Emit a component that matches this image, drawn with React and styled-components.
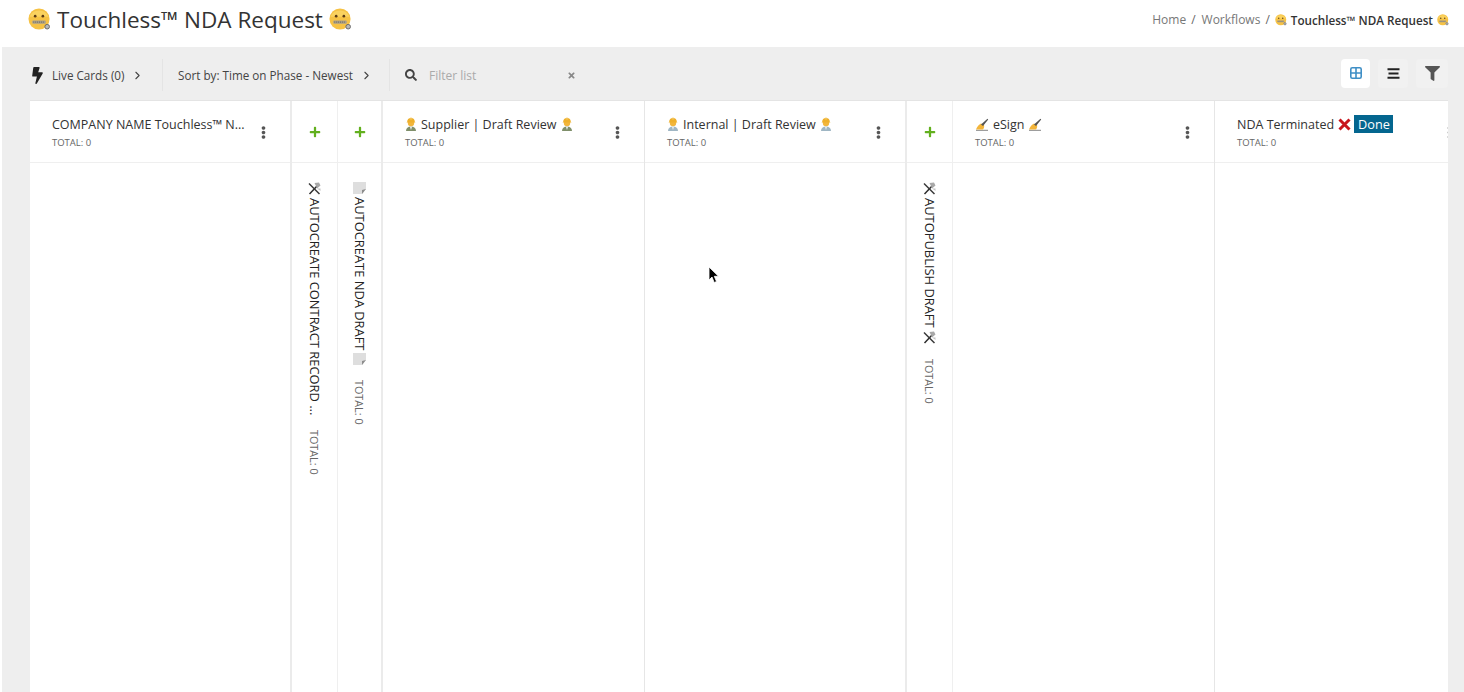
import styled, { createGlobalStyle } from "styled-components";
import { FaBolt, FaSearch, FaFilter, FaTimes, FaPlus, FaEllipsisV } from "react-icons/fa";
import { LuChevronRight } from "react-icons/lu";

const GlobalStyle = createGlobalStyle`
  * { box-sizing: border-box; }
  html, body { margin: 0; height: 692px; overflow: hidden; background: #fff; }
  body { font-family: "Open Sans", "Liberation Sans", sans-serif; color: #333; }
`;

function ZipFace({ size = 12 }) {
  return (
    <svg width={size} height={size} viewBox="0 0 24 24">
      <circle cx="11.5" cy="11.5" r="11" fill="#f6c244" />
      <path d="M1.5 9a11 11 0 0 1 20 0z" fill="#fad25f" />
      <circle cx="7.5" cy="8.5" r="1.4" fill="#5b3a14" />
      <circle cx="15.5" cy="8.5" r="1.4" fill="#5b3a14" />
      <rect x="4.5" y="13" width="14" height="3.4" rx="1" fill="#a9a08a" />
      <path d="M5.5 14.7h12" stroke="#6b6250" strokeWidth="1" strokeDasharray="1 1" />
      <circle cx="20" cy="19.5" r="2.4" fill="#b8b8b8" stroke="#666" strokeWidth="1" />
    </svg>
  );
}

function Worker({ coat = "#8a9aa8" }) {
  return (
    <svg width="12" height="14" viewBox="0 0 12 14">
      <path d="M1 14c0-3 2-4.500 5-4.500s5 1.500 5 4.500z" fill={coat} />
      <path d="M4.800 9.500h2.400L6 13z" fill="#e9eef0" />
      <circle cx="6" cy="6" r="3.200" fill="#f2b63c" />
      <path d="M2.200 4.800a3.800 3.800 0 0 1 7.600 0l.7.800h-9z" fill="#eeb02c" />
      <rect x="5.200" y="0.600" width="1.600" height="2" fill="#f4c860" />
    </svg>
  );
}

function WritingHand() {
  return (
    <svg width="14" height="13" viewBox="0 0 14 13">
      <path d="M1 12.300h12" stroke="#666" strokeWidth="0.800" />
      <path d="M1 11.500c1-3 3-5 5-6l3 1.500c.5 1.500 0 3-1 4.500z" fill="#f3b53a" />
      <path d="M6 6.500 12.500.800l.7.700L8 8z" fill="#555" />
    </svg>
  );
}

function Tools() {
  return (
    <svg width="13" height="13" viewBox="0 0 13 13">
      <path d="M1.500 12 10 3" stroke="#2c2c2c" strokeWidth="1.500" />
      <path d="M1 1.500 11.500 12" stroke="#3a3a3a" strokeWidth="1.500" />
      <path d="M6.500 1 11 .6l1.500 3-3.500 3-1-2.600z" fill="#a8a8a8" />
      <path d="M9 6.500h3.500V9z" fill="#c4c4c4" />
    </svg>
  );
}

function Sheet() {
  return (
    <svg width="13" height="12" viewBox="0 0 13 12">
      <path d="M0 0h13v7l-4 5H0z" fill="#dedede" />
      <path d="M13 7 9 12V8z" fill="#8d8d8d" />
    </svg>
  );
}

function RedCross() {
  return (
    <svg width="13" height="13" viewBox="0 0 13 13">
      <path d="M1.500 1.500 11.500 11.500M11.500 1.500 1.500 11.500" stroke="#c8141c" strokeWidth="3" />
    </svg>
  );
}

function GridGlyph() {
  return (
    <svg width="12" height="12" viewBox="0 0 12 12">
      <rect x="0.800" y="0.800" width="10.400" height="10.400" rx="1.500" fill="none" stroke="#3f8fc6" strokeWidth="1.600" />
      <path d="M6 1v10M1 6h10" stroke="#3f8fc6" strokeWidth="1.600" />
    </svg>
  );
}

function ListGlyph() {
  return (
    <svg width="13" height="11" viewBox="0 0 13 11">
      <path d="M0.500 1.200h12M1.500 5.500h10M0.500 9.800h12" stroke="#222" strokeWidth="2" />
    </svg>
  );
}

function Cursor() {
  return (
    <svg width="12" height="18" viewBox="0 0 12 18">
      <path d="M1 1v13l3-3 2.200 5.500 2.300-1-2.200-5.200H10.500z" fill="#000" stroke="#fff" strokeWidth="0.800" />
    </svg>
  );
}

function StageColumn({ children, thick }) {
  return (
    <Column $thick={thick}>
      <ColumnHead>
        <HeadText>
          <ColumnName>{children}</ColumnName>
          <Total>TOTAL: 0</Total>
        </HeadText>
        <Kebab />
      </ColumnHead>
    </Column>
  );
}

function StageRail({ children, width, thick }) {
  return (
    <Rail $width={width} $thick={thick}>
      <RailHead><PlusIcon /></RailHead>
      <RailBody>
        <RailName>{children}</RailName>
        <RailTotal>TOTAL: 0</RailTotal>
      </RailBody>
    </Rail>
  );
}

export default function App() {
  return (
    <>
      <GlobalStyle />
      <TopBar>
        <Title>
          <ZipFace size={23} /> <span>Touchless™ NDA Request</span> <ZipFace size={23} />
        </Title>
        <Crumbs>
          <span>Home</span>
          <Slash>/</Slash>
          <span>Workflows</span>
          <Slash>/</Slash>
          <Current>
            <ZipFace size={12} /> Touchless™ NDA Request <ZipFace size={12} />
          </Current>
        </Crumbs>
      </TopBar>
      <Content>
        <Toolbar>
          <ToolItem $width={132}>
            <BoltIcon />
            <span>Live Cards (0)</span>
            <Chevron />
          </ToolItem>
          <ToolItem $width={228} $divider>
            <span>Sort by: Time on Phase - Newest</span>
            <Chevron />
          </ToolItem>
          <Search>
            <SearchIcon />
            <Placeholder>Filter list</Placeholder>
            <ClearIcon />
          </Search>
          <ViewButtons>
            <ViewButton $width={29} $active><GridGlyph /></ViewButton>
            <ViewButton $width={30}><ListGlyph /></ViewButton>
            <ViewButton $width={32}><FilterIcon /></ViewButton>
          </ViewButtons>
        </Toolbar>
        <Board>
          <StageColumn thick>COMPANY NAME Touchless™ N...</StageColumn>
          <StageRail width={46}><Tools /> AUTOCREATE CONTRACT RECORD ...</StageRail>
          <StageRail width={45} thick><Sheet /> AUTOCREATE NDA DRAFT <Sheet /></StageRail>
          <StageColumn><Worker coat="#7f8f6a" /> Supplier | Draft Review <Worker coat="#7f8f6a" /></StageColumn>
          <StageColumn thick><Worker coat="#9fb6c4" /> Internal | Draft Review <Worker coat="#9fb6c4" /></StageColumn>
          <StageRail width={46}><Tools /> AUTOPUBLISH DRAFT <Tools /></StageRail>
          <StageColumn><WritingHand /> eSign <WritingHand /></StageColumn>
          <StageColumn>NDA Terminated <RedCross /> <DoneTag>Done</DoneTag></StageColumn>
        </Board>
      </Content>
      <CursorSpot><Cursor /></CursorSpot>
    </>
  );
}

const TopBar = styled.header`
  display: flex;
  align-items: center;
  justify-content: space-between;
  height: 47px;
  padding: 0 15px 8px 28px;
`;
const Title = styled.h1`
  display: flex;
  align-items: center;
  gap: 6px;
  margin: 0;
  font-size: 22.500px;
  font-weight: 400;
  color: #333;
`;
const Crumbs = styled.nav`
  display: flex;
  align-items: center;
  font-size: 12px;
  color: #777;
`;
const Slash = styled.span`
  margin: 0 6px 0 5px;
  color: #666;
`;
const Current = styled.span`
  display: flex;
  align-items: center;
  gap: 4px;
  margin-left: -1px;
  font-size: 11.700px;
  font-weight: 600;
  color: #333;
`;
const Content = styled.main`
  height: 645px;
  margin-left: 2px;
  padding: 0 16px 0 28px;
  background: #eeeeee;
  overflow: hidden;
`;
const Toolbar = styled.div`
  display: flex;
  align-items: center;
  height: 54px;
  padding-top: 3px;
  border-bottom: 1px solid #e4e4e4;
`;
const ToolItem = styled.div`
  display: flex;
  align-items: center;
  width: ${(p) => p.$width}px;
  height: 32px;
  padding-left: ${(p) => (p.$divider ? "15px" : "1px")};
  font-size: 11.700px;
  color: #444;
  ${(p) => (p.$divider ? "border-left: 1px solid #e4e4e4; border-right: 1px solid #e4e4e4;" : "")}
`;
const BoltIcon = styled(FaBolt)`
  width: 13px;
  height: 17px;
  margin-right: 8px;
  color: #222;
`;
const Chevron = styled(LuChevronRight)`
  width: 13px;
  height: 13px;
  margin-left: 7px;
  color: #444;
`;
const Search = styled.div`
  display: flex;
  align-items: center;
  width: 186px;
  padding-left: 15px;
  font-size: 12px;
`;
const SearchIcon = styled(FaSearch)`
  width: 12px;
  height: 12px;
  color: #444;
`;
const Placeholder = styled.span`
  flex: 1;
  margin-left: 12px;
  color: #aaa;
`;
const ClearIcon = styled(FaTimes)`
  width: 9px;
  height: 9px;
  color: #888;
`;
const ViewButtons = styled.div`
  display: flex;
  gap: 8px;
  margin-left: auto;
  margin-bottom: 4px;
`;
const ViewButton = styled.div`
  display: flex;
  align-items: center;
  justify-content: center;
  width: ${(p) => p.$width}px;
  height: 29px;
  border-radius: 4px;
  background: ${(p) => (p.$active ? "#fff" : "#f1f1f1")};
`;
const FilterIcon = styled(FaFilter)`
  width: 15px;
  height: 15px;
  color: #555;
`;
const Board = styled.section`
  display: flex;
  height: 591px;
  background: #fff;
  overflow: hidden;
`;
const Column = styled.div`
  flex: 0 0 262px;
  border-right: ${(p) => (p.$thick ? "2px solid #ebebeb" : "1px solid #e6e6e6")};
`;
const ColumnHead = styled.div`
  display: flex;
  align-items: center;
  justify-content: space-between;
  height: 62px;
  padding: 0 20px 0 22px;
  border-bottom: 1px solid #efefef;
`;
const HeadText = styled.div`
  display: flex;
  flex-direction: column;
  gap: 3px;
  min-width: 0;
  padding-top: 1px;
`;
const ColumnName = styled.div`
  display: flex;
  align-items: center;
  gap: 4px;
  height: 18px;
  font-size: 12.500px;
  white-space: nowrap;
  color: #333;
`;
const Total = styled.div`
  font-size: 9.500px;
  line-height: 13px;
  color: #666;
`;
const Kebab = styled(FaEllipsisV)`
  flex: none;
  width: 13px;
  height: 13px;
  margin-top: 2px;
  color: #555;
`;
const Rail = styled.div`
  flex: 0 0 ${(p) => p.$width}px;
  min-width: 0;
  border-right: ${(p) => (p.$thick ? "2px solid #ebebeb" : "1px solid #efefef")};
`;
const RailHead = styled.div`
  display: flex;
  align-items: center;
  justify-content: center;
  height: 62px;
  border-bottom: 1px solid #efefef;
`;
const PlusIcon = styled(FaPlus)`
  width: 12px;
  height: 12px;
  color: #62b01e;
`;
const RailBody = styled.div`
  display: flex;
  flex-direction: column;
  align-items: center;
  gap: 15px;
  padding-top: 19px;
`;
const RailName = styled.div`
  display: flex;
  align-items: center;
  gap: 3px;
  writing-mode: vertical-rl;
  font-size: 12.900px;
  white-space: nowrap;
  color: #222;
`;
const RailTotal = styled.div`
  writing-mode: vertical-rl;
  font-size: 10.800px;
  color: #666;
`;
const DoneTag = styled.span`
  margin-left: -1px;
  padding: 0 3px 0 4px;
  font-size: 12.700px;
  line-height: 18px;
  color: #fff;
  background: #04668f;
`;
const CursorSpot = styled.div`
  position: absolute;
  left: 708px;
  top: 266px;
  line-height: 0;
`;
